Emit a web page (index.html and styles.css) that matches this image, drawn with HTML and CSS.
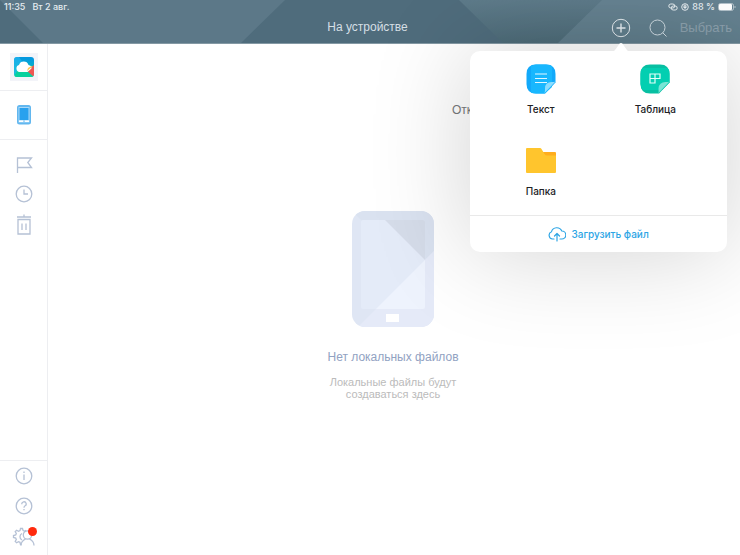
FILE: index.html
```html
<!DOCTYPE html>
<html lang="ru">
<head>
<meta charset="utf-8">
<meta name="viewport" content="width=device-width, initial-scale=1">
<title>На устройстве</title>
<link rel="stylesheet" href="styles.css">
</head>
<body>
<div class="app">
  <header class="header">
    <svg class="facets" viewBox="0 0 740 44" preserveAspectRatio="none" aria-hidden="true">
      <defs>
        <linearGradient id="fade" x1="0" y1="0" x2="0" y2="1"><stop offset="0" stop-color="#5e7b8a"/><stop offset="1" stop-color="#4e6c79"/></linearGradient>
      </defs>
      <path fill="#4f6c7c" d="M0 0h740v44H0z"/>
      <path fill="#5c7888" d="M0 0h285l-44 44H43z"/>
      <path fill="url(#fade)" d="M459 0h281v44H503z"/>
      <path fill="#6d8997" fill-opacity=".6" d="M602 0h138v44H558z"/>
    </svg>
    <div class="status">
      <span>11:35</span><span>Вт 2 авг.</span>
      <span class="status-right">
        <svg width="10" height="8" viewBox="0 0 10 8" fill="none" stroke="currentColor"><rect x=".8" y="1" width="6" height="4" rx="2"/><rect x="3.2" y="3" width="6" height="4" rx="2"/></svg>
        <svg width="8" height="8" viewBox="0 0 8 8" fill="none" stroke="currentColor"><circle cx="4" cy="4" r="3.3"/><path d="M3 4V3a1 1 0 0 1 2 0v1"/><path fill="currentColor" d="M3 4h2v1H3z"/></svg>
        <span>88 %</span>
        <svg width="18" height="8" viewBox="0 0 18 8"><rect x=".5" y=".5" width="15" height="7" rx="2" fill="none" stroke="currentColor" opacity=".6"/><rect x="1" y="1" width="13" height="6" rx="1" fill="#fff"/><path d="M17 3v2" stroke="currentColor" opacity=".6"/></svg>
      </span>
    </div>
    <div class="toolbar">
      <h1>На устройстве</h1>
      <div class="actions">
        <div class="add">
          <button class="icon-button" aria-label="Добавить"><svg width="20" height="20" viewBox="0 0 20 20" fill="none" stroke="currentColor"><circle cx="10" cy="10" r="8.7"/><path stroke-width="1.4" d="M10 5.500v9M5.500 10h9"/></svg></button>
          <div class="popover">
            <svg class="arrow" width="20" height="10" viewBox="0 0 20 10" aria-hidden="true"><path fill="#fff" d="M0 10c3 0 4-2 5.500-4L8.700 1.500q1.300-1 2.600 0L14.500 6C16 8 17 10 20 10z"/></svg>
            <div class="choices">
              <button class="choice">
                <svg width="30" height="30" viewBox="0 0 30 30"><path fill="#12a9fa" d="M10 .5h10q9.500 0 9.500 9.500v8.500L19 29.500h-9Q.5 29.500 .5 20V10Q.5 .5 10 .5z"/><path fill="#18b7fe" d="M5 2Q7 .5 10 .5h10q4 0 6 1.500v21l-7 6.500h-9q-3 0-5-1z"/><path fill="#8bddff" d="M29.500 17.500 18 29.500c1-1 1-3 1-5q0-6.500 6.500-6.500 3 0 4-.5z"/><path stroke="#e2f7ff" stroke-width="1.200" d="M9 10h12M9 14.500h12M9 18.500h12"/></svg>
                <span>Текст</span>
              </button>
              <button class="choice">
                <svg width="30" height="30" viewBox="0 0 30 30"><path fill="#08bfa2" d="M10 .5h10q9.500 0 9.500 9.500v8.500L19 29.500h-9Q.5 29.500 .5 20V10Q.5 .5 10 .5z"/><path fill="#03cfb1" d="M2.500 4h25q2 2 2 6v8.500L22 26H3Q.5 24 .5 20V10q0-4 2-6z"/><path fill="#79e5d5" d="M29.500 17.500 18 29.500c1-1 .5-3 .5-5q.5-6.500 7-6.500 3 0 4-.5z"/><path fill="none" stroke="#e2fff9" stroke-width="1.200" d="M10 10h10v4.500H10zM10 10v9h5v-9"/></svg>
                <span>Таблица</span>
              </button>
              <button class="choice">
                <svg width="30" height="30" viewBox="0 0 30 30"><path fill="#ffad1d" d="M15 6h14q1 0 1 1v5H15z"/><path fill="#ffc52d" d="M1 2h13q1 0 1.500 1l3 5q1 1.500 2.500 1.500h9V26q0 1-1 1H1q-1 0-1-1V3q0-1 1-1z"/></svg>
                <span>Папка</span>
              </button>
            </div>
            <button class="upload">
              <svg width="18" height="15" viewBox="0 0 18 15" fill="none" stroke="currentColor" stroke-width="1.200" stroke-linecap="round" stroke-linejoin="round"><path d="M6 12H4.500A3.800 3.800 0 0 1 3.500 4.700 5.500 5.500 0 0 1 13.800 4a4 4 0 0 1 0 8H12M9 14V6.500M6.500 9 9 6.500 11.500 9"/></svg>
              <span>Загрузить файл</span>
            </button>
          </div>
        </div>
        <button class="icon-button" aria-label="Поиск"><svg width="18" height="18" viewBox="0 0 18 18" fill="none" stroke="currentColor" opacity=".75"><circle cx="8.500" cy="8.500" r="7.500"/><path d="m13.700 13.700 3.800 3.800"/></svg></button>
        <button class="select-button">Выбрать</button>
      </div>
    </div>
  </header>
  <div class="body">
    <nav class="sidebar">
      <a class="account" href="#" aria-label="Облако">
        <span class="logo-tile"><svg width="20" height="20" viewBox="0 0 20 20"><defs><clipPath id="tile"><rect width="20" height="20" rx="3"/></clipPath><linearGradient id="sky" x1="0" y1="0" x2="0" y2="1"><stop offset=".1" stop-color="#0599df"/><stop offset="1" stop-color="#0bd6ab"/></linearGradient></defs><g clip-path="url(#tile)"><path fill="url(#sky)" d="M0 0h20v20H0z"/><path fill="#26bbf2" fill-opacity=".6" d="M0 0h5l7 10-12 8z"/><path fill="#09d19e" d="M3 14h11l6 6H0z"/><path fill="#ef5752" d="M20 8v12l-7-6z"/><path fill="#fff" d="M5.500 15a3.600 3.600 0 0 1-.5-7A5 5 0 0 1 14.500 8a3.500 3.500 0 0 1 3 3.500L13.500 15z"/><path fill="#ffc94b" d="m13 14 1-3 3.500-2 1 .5z"/></g></svg></span>
      </a>
      <a class="device" href="#" aria-label="На устройстве"><svg width="14" height="20" viewBox="0 0 14 20"><rect width="14" height="19.500" rx="2.500" fill="#62b7ef"/><path fill="#a9d8f8" d="M1.500 2h11v15.500h-11z"/><path fill="#28a1ee" d="M2.500 3h9v12h-9z"/><path fill="#fff" d="M2 15.500h4V17H2zM8 15.500h4V17H8z"/></svg></a>
      <div class="links">
        <a href="#" aria-label="Избранное"><svg width="18" height="18" viewBox="0 0 18 18"><path d="M2.500 17V2h14L12.800 6.500l3.700 5h-14"/></svg></a>
        <a href="#" aria-label="Недавние"><svg width="18" height="18" viewBox="0 0 18 18"><circle cx="9" cy="9" r="7.800"/><path d="M9 4.500V9h4"/></svg></a>
        <a href="#" aria-label="Корзина"><svg width="18" height="22" viewBox="0 0 18 22"><path d="M2 3h14M9 3V.5M3 5.500h12V20H3zM7 9.500v6.500M11 9.500v6.500"/></svg></a>
      </div>
      <div class="help">
        <a href="#" aria-label="Информация"><svg width="18" height="18" viewBox="0 0 18 18"><circle cx="9" cy="9" r="7.800"/><path d="M9 7.500V13M9 4.500V6"/></svg></a>
        <a href="#" aria-label="Помощь"><svg width="18" height="18" viewBox="0 0 18 18"><circle cx="9" cy="9" r="7.800"/><path d="M6.800 7.200A2.200 2.200 0 1 1 9.800 9Q9 9.500 9 10.700M9 12v1.300"/></svg></a>
        <a class="settings" href="#" aria-label="Настройки"><svg width="24" height="20" viewBox="0 0 24 20"><path d="M11 3.500 10.500 1.500h-2L8 3.600 6.500 4.300 4.600 3.200 3.200 4.600l1.100 1.900L3.700 8l-2.200.5v2l2.200.5.6 1.500-1.100 1.900 1.400 1.400 1.900-1.100 1.500.6.500 2.200h1M10 6.500a3.600 3.600 0 0 0 0 6.500M11 3.500l1.500.7 1.500-1"/><circle cx="15.500" cy="8" r="4.200"/><path d="M9 18.500c0-4 2.500-5.500 4.500-6.500M17.500 12c2 1 4.500 2.500 4.500 6.500"/></svg><span class="badge"></span></a>
      </div>
    </nav>
    <main class="content">
      <div class="sorting">Отк</div>
      <section class="empty">
        <svg width="82" height="116" viewBox="0 0 82 116" aria-hidden="true">
          <defs><clipPath id="tablet"><rect width="82" height="116" rx="13"/></clipPath></defs>
          <g clip-path="url(#tablet)"><path fill="#dfe6f4" d="M0 0h82v116H0z"/><path fill="#dae2f0" d="M0 0h82v40l-9 9L9 9z"/><path fill="#e5eaf8" d="M82 40v76H6z"/></g>
          <rect x="9" y="9" width="64" height="89" rx="2" fill="#e4ebf8"/><path fill="#d5dce9" d="M33 9h38q2 0 2 2v38z"/><path fill="#eef3fd" d="M73 49v47q0 2-2 2H24z"/><path fill="#fff" d="M34 103h13v8H34z"/>
        </svg>
        <h2>Нет локальных файлов</h2>
        <p>Локальные файлы будут<br>создаваться здесь</p>
      </section>
    </main>
  </div>
</div>
</body>
</html>
```
FILE: styles.css
```css
* { box-sizing: border-box; }
body { margin: 0; font-family: "Liberation Sans", Arial, sans-serif; background: #fff; }
button { border: 0; padding: 0; background: none; color: inherit; font: inherit; cursor: pointer; }
h1, h2, p { margin: 0; }
svg { display: block; flex: none; }

.app { min-height: 100vh; display: flex; flex-direction: column; }

.header { position: relative; z-index: 1; color: #e6edf1; border-bottom: 1px solid #8499a4; }
.facets { position: absolute; inset: 0; width: 100%; height: 100%; }
.status { position: relative; display: flex; align-items: center; gap: 7px; height: 13px; padding: 0 4px; font: 500 9px/13px Inter, sans-serif; }
.status-right { display: flex; align-items: center; gap: 3px; margin-left: auto; }
.toolbar { position: relative; display: grid; grid-template-columns: 1fr auto 1fr; align-items: center; height: 30px; padding: 0 8px 0 3px; }
.toolbar h1 { grid-column: 2; margin-bottom: 2px; font-size: 12px; line-height: 16px; font-weight: 400; color: #d5dfe5; }
.actions { grid-column: 3; display: flex; align-items: center; justify-content: flex-end; gap: 11px; }
.icon-button { display: grid; place-items: center; width: 22px; height: 22px; }
.select-button { color: #8ca0ac; font-size: 13px; line-height: 20px; }

.add { position: relative; margin-right: 4px; }
.popover { position: absolute; top: 34px; right: -95px; width: 257px; border-radius: 10px; background: #fff; box-shadow: 0 0 100px rgba(0, 0, 0, .18); color: #202124; font: 500 10px/14px Inter, sans-serif; }
.arrow { position: absolute; top: -9px; right: 96px; }
.choices { display: grid; grid-template-columns: 1fr 1fr; row-gap: 30px; padding: 13px 14px 17px; }
.choice { display: flex; flex-direction: column; align-items: center; gap: 8px; }
.upload { display: flex; align-items: center; justify-content: center; gap: 6px; width: 100%; height: 37px; border-top: 1px solid #e9e9e9; color: #2da5e5; }

.body { flex: 1; display: flex; }
.sidebar { width: 48px; display: flex; flex-direction: column; border-right: 1px solid #edeef1; }
.account, .device { display: grid; place-items: center; border-bottom: 1px solid #edeef1; }
.account { height: 47px; }
.device { height: 49px; }
.logo-tile { display: grid; place-items: center; width: 28px; height: 28px; background: #f3f4f9; }
.links, .help { display: flex; flex-direction: column; align-items: center; gap: 12px; }
.links { padding-top: 16px; gap: 11px; }
.links svg, .help svg { fill: none; stroke: #b5c1d5; stroke-width: 1.3; }
.help { margin-top: auto; padding: 6px 0 8px; border-top: 1px solid #edeef1; }
.settings { position: relative; }
.badge { position: absolute; top: 0; right: -1px; width: 9px; height: 9px; border-radius: 50%; background: #ff2a0d; }

.content { flex: 1; display: flex; flex-direction: column; }
.sorting { padding: 58px 268px 0 0; text-align: right; font-size: 12px; line-height: 16px; color: #77797b; }
.empty { display: flex; flex-direction: column; align-items: center; padding: 93px 2px 0 0; text-align: center; }
.empty h2 { margin-top: 22px; font-size: 12px; line-height: 16px; font-weight: 400; color: #91a2c2; }
.empty p { margin-top: 11px; font-size: 11px; line-height: 12px; color: #bbb; }
```
